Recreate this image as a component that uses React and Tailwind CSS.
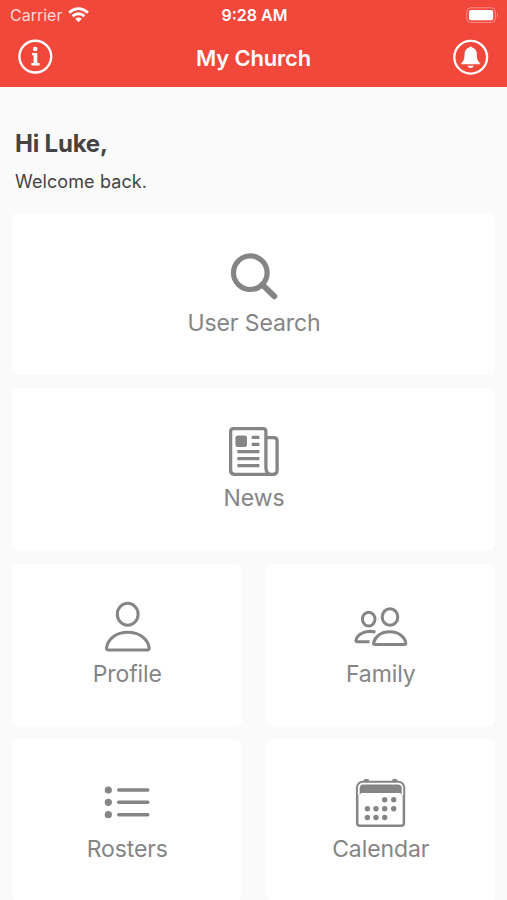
import React from 'react';

const SearchIcon = () => (
  <svg width="60" height="60" viewBox="0 0 60 60" fill="none" stroke="currentColor" strokeWidth="5.2" strokeLinecap="round">
    <circle cx="26.3" cy="25.7" r="16.8" />
    <path d="M38.3 37.6 50.4 49.3" strokeWidth="5.8" />
  </svg>
);

const NewsIcon = () => (
  <svg width="60" height="60" viewBox="0.8 0 60 60" fill="none" stroke="currentColor" strokeWidth="3.3">
    <path d="M42.7 15.6H50.5Q53.9 15.6 53.9 19V48Q53.9 52.4 49.5 52.4H11.5Q7.4 52.4 7.4 48.3V9.6Q7.4 6.6 10.4 6.6H39.7Q42.7 6.6 42.7 9.6V45.5Q42.7 52.4 48.5 52.4" />
    <rect x="12.2" y="13.5" width="11.6" height="11.5" rx="2.5" fill="currentColor" stroke="none" />
    <path d="M28.5 15.3H36.2M28.5 22.3H36.2M14.2 29.7H36.2M14.2 36.7H36.2M14.2 43.7H36.2" />
  </svg>
);

const ProfileIcon = () => (
  <svg width="60" height="60" viewBox="0 0 60 60" fill="none" stroke="currentColor" strokeWidth="3" strokeLinejoin="round">
    <ellipse cx="30.7" cy="16.3" rx="10.4" ry="11" />
    <path d="M11 51.9Q9.3 51.9 9.5 50C10.8 41 19 34.3 30.8 34.3S50.9 41 52.2 50Q52.4 51.9 50.7 51.9Z" />
  </svg>
);

const FamilyIcon = () => (
  <svg width="60" height="60" viewBox="0 0 60 60" fill="none" stroke="currentColor" strokeWidth="3" strokeLinejoin="round">
    <ellipse cx="18.7" cy="21.1" rx="6.3" ry="6.9" />
    <ellipse cx="40" cy="19" rx="7.8" ry="8.3" />
    <path d="M25.5 34C16 31.8 7.4 36 6 42Q5.7 43.8 7.3 43.8H19.5" />
    <path d="M25 46.6Q23.2 46.6 23.6 44.8C25 38.5 31 33.8 39.7 33.8S54.6 38.5 55.8 44.8Q56.2 46.6 54.4 46.6Z" />
  </svg>
);

const RostersIcon = () => (
  <svg width="60" height="60" viewBox="0 0 60 60" fill="currentColor" stroke="currentColor" strokeLinecap="round" strokeWidth="3.4">
    {[17, 29.3, 41.7].map(y => (
      <g key={y}>
        <circle cx="11.3" cy={y} r="3.6" stroke="none" />
        <path d={`M21.7 ${y}H50.8`} />
      </g>
    ))}
  </svg>
);

const CALENDAR_DOTS = [
  [35, 26.7], [44, 26.7],
  [17.7, 35.7], [26.3, 35.7], [35, 35.7], [44, 35.7],
  [17.7, 44.5], [26.3, 44.5], [35, 44.5],
];

const CalendarIcon = () => (
  <svg width="60" height="60" viewBox="0.3 0 60 60" fill="none" stroke="currentColor">
    <path d="M7.5 22V50Q7.5 52.8 10.3 52.8H51.4Q54.2 52.8 54.2 50V22" strokeWidth="2.5" />
    <path d="M7.2 23V14Q8.5 8.7 13 8.7H48.8Q53.2 8.7 54.5 14V23" strokeWidth="2" />
    <path d="M10 22V14Q11.2 11.6 13.5 11.6H48.3Q50.8 11.6 52 14V22L50.5 20H11.5Z" fill="currentColor" stroke="none" />
    <path d="M15.5 7.5H17.9M43.9 7.5H46.3" strokeWidth="3" strokeLinecap="round" />
    {CALENDAR_DOTS.map(([x, y]) => (
      <circle key={`${x}-${y}`} cx={x} cy={y} r="2.7" fill="currentColor" stroke="none" />
    ))}
  </svg>
);

const Tile = ({ icon: Icon, label }) => (
  <button className="flex h-[162px] w-full flex-col items-center rounded-md bg-white pt-[34px] text-[#858585]">
    <Icon />
    <span className="pt-px pl-px text-[23px] leading-[30px] tracking-[-0.1px]">{label}</span>
  </button>
);

const StatusBar = () => (
  <div className="grid h-[30px] grid-cols-3 items-center pl-2.5 pr-2">
    <div className="flex items-center gap-1.5 text-[#ffd9d5]">
      <span className="text-base">Carrier</span>
      <svg width="21" height="16" viewBox="0 0 21 16" fill="none" stroke="#fff" strokeWidth="2.8">
        <path d="M1 5.6Q10.5-2.4 20 5.6M4.5 9.2Q10.5 4.2 16.5 9.2" />
        <path d="M10.5 15.2 7.2 11.8Q10.5 9.2 13.8 11.8Z" fill="#fff" stroke="none" />
      </svg>
    </div>
    <span className="text-center text-base font-semibold">9:28 AM</span>
    <svg className="ml-auto" width="33" height="16" viewBox="0 0 33 16">
      <rect x=".8" y=".8" width="28.6" height="14.6" rx="4" fill="none" stroke="#fff" strokeOpacity=".4" />
      <rect x="3" y="3" width="24.2" height="10.3" rx="2" fill="#fff" />
      <path d="M31 5.5Q33 8 31 10.5Z" fill="#fff" fillOpacity=".45" />
    </svg>
  </div>
);

const NavBar = () => (
  <div className="flex h-[57px] items-center justify-between pr-[18px] pb-1 pl-[17px]">
    <svg width="36" height="36" viewBox="0 0 36 36">
      <circle cx="18.3" cy="17.6" r="15.9" fill="none" stroke="#fff" strokeWidth="2.4" />
      <circle cx="18.2" cy="10" r="2.3" fill="#fff" />
      <path d="M15.1 14H20.3V24.1H22.5V26.5H14.4V24.1H16.6V16.3H15.1Z" fill="#fff" />
    </svg>
    <h1 className="pt-1 pl-px text-[22px] font-semibold tracking-[-0.2px]">My Church</h1>
    <svg width="36" height="36" viewBox="0 0 36 36">
      <circle cx="17.7" cy="18.2" r="16.4" fill="none" stroke="#fff" strokeWidth="2.3" />
      <path d="M16.2 8.6Q17.7 6.2 19.2 8.6Q23.7 9.8 23.9 15.5C24 20.5 24.6 21.8 27.3 24.4V25.3H8.1V24.4C10.8 21.8 11.4 20.5 11.5 15.5Q11.7 9.8 16.2 8.6Z" fill="#fff" />
      <path d="M14.6 26.7H20.8Q20.3 29.1 17.7 29.1T14.6 26.7Z" fill="#fff" />
    </svg>
  </div>
);

export default function App() {
  return (
    <div className="h-[900px] w-full overflow-hidden bg-[#fafafa] font-['Inter','Liberation_Sans',sans-serif]">
      <header className="h-[87px] bg-[#f2473b] text-white">
        <StatusBar />
        <NavBar />
      </header>

      <main className="px-3">
        <section className="h-[126px] pl-[3px] pt-10 text-[#444]">
          <h2 className="text-2xl leading-[34px] font-bold tracking-[-0.2px]">Hi Luke,</h2>
          <p className="pt-[7px] text-lg leading-7 tracking-[0.1px]">Welcome back.</p>
        </section>

        <div className="grid grid-cols-2 gap-x-6 gap-y-[13.3px]">
          <div className="col-span-2">
            <Tile icon={SearchIcon} label="User Search" />
          </div>
          <div className="col-span-2">
            <Tile icon={NewsIcon} label="News" />
          </div>
          <Tile icon={ProfileIcon} label="Profile" />
          <Tile icon={FamilyIcon} label="Family" />
          <Tile icon={RostersIcon} label="Rosters" />
          <Tile icon={CalendarIcon} label="Calendar" />
        </div>
      </main>
    </div>
  );
}
